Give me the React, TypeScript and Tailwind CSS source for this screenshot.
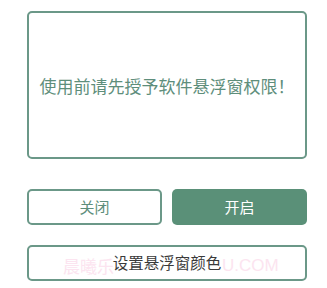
export default function App() {
  return (
    <div className="relative w-[327px] h-[288px] bg-white pl-[27px] pr-[20px] pt-[11px] font-['Noto_Sans_CJK_SC',sans-serif]">
      <div className="h-[148px] w-[280px] flex items-center justify-center rounded-[5px] border-2 border-[#6b9888]">
        <p className="text-[17px] text-[#5e8e7b] mt-[1px]">使用前请先授予软件悬浮窗权限！</p>
      </div>
      <div className="mt-[30px] flex w-[280px] gap-[10px]">
        <button className="h-[36px] w-[135px] rounded-[5px] border-2 border-[#6b9888] text-[15px] text-[#5e8e7b]">关闭</button>
        <button className="h-[36px] w-[135px] rounded-[5px] bg-[#5a9078] text-[15px] text-white">开启</button>
      </div>
      <button className="mt-[20px] h-[36px] w-[280px] rounded-[5px] border-2 border-[#6b9888] text-[15.5px] text-[#3a3a3a]">设置悬浮窗颜色</button>
      <div className="pointer-events-none absolute left-[63px] top-[253px] text-[17px] text-[#fbd9ea] opacity-70 whitespace-nowrap">晨曦乐</div>
      <div className="pointer-events-none absolute left-[222px] top-[253px] text-[17px] text-[#fbd9ea] opacity-70 whitespace-nowrap font-['Liberation_Sans',sans-serif]">U.COM</div>
    </div>
  );
}
